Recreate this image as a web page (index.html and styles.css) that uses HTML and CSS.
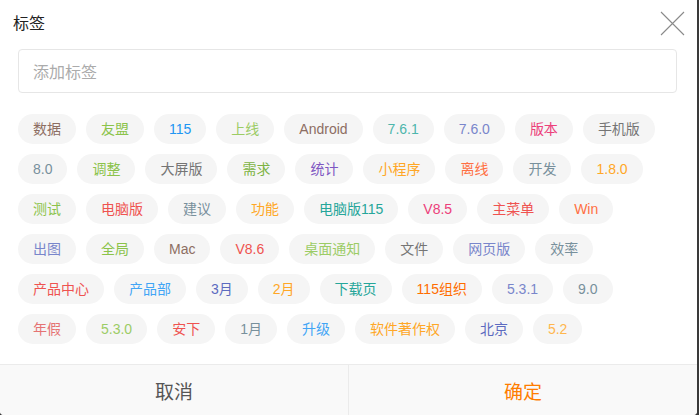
FILE: index.html
```html
<!DOCTYPE html>
<html lang="zh-CN">
<head>
<meta charset="utf-8">
<title>标签</title>
<link rel="stylesheet" href="styles.css">
</head>
<body>
<div class="dialog">
  <div class="header">
    <div class="title">标签</div>
    <button class="close" aria-label="关闭">
      <svg width="25" height="25" viewBox="0 0 25 25"><path d="M1 1L24 24M24 1L1 24" stroke="#8a8a8a" stroke-width="1.1" fill="none"/></svg>
    </button>
  </div>
  <div class="field"><input class="input" type="text" placeholder="添加标签"></div>
  <div class="tags">
    <div class="row">
      <span class="tag c-brown">数据</span><span class="tag c-green">友盟</span><span class="tag c-blue">115</span><span class="tag c-lgreen">上线</span><span class="tag c-brown">Android</span><span class="tag c-teal">7.6.1</span><span class="tag c-indigo">7.6.0</span><span class="tag c-pink">版本</span><span class="tag c-gray">手机版</span>
    </div>
    <div class="row">
      <span class="tag c-bgray">8.0</span><span class="tag c-green">调整</span><span class="tag c-gray">大屏版</span><span class="tag c-dgreen">需求</span><span class="tag c-purple">统计</span><span class="tag c-orange">小程序</span><span class="tag c-dorange">离线</span><span class="tag c-bgray">开发</span><span class="tag c-orange">1.8.0</span>
    </div>
    <div class="row">
      <span class="tag c-green">测试</span><span class="tag c-red">电脑版</span><span class="tag c-bgray">建议</span><span class="tag c-orange">功能</span><span class="tag c-dteal">电脑版115</span><span class="tag c-pink">V8.5</span><span class="tag c-red">主菜单</span><span class="tag c-dorange">Win</span>
    </div>
    <div class="row">
      <span class="tag c-indigo">出图</span><span class="tag c-green">全局</span><span class="tag c-brown">Mac</span><span class="tag c-red">V8.6</span><span class="tag c-lgreen">桌面通知</span><span class="tag c-gray">文件</span><span class="tag c-indigo">网页版</span><span class="tag c-bgray">效率</span>
    </div>
    <div class="row">
      <span class="tag c-red">产品中心</span><span class="tag c-lblue">产品部</span><span class="tag c-dindigo">3月</span><span class="tag c-orange">2月</span><span class="tag c-dteal">下载页</span><span class="tag c-deep">115组织</span><span class="tag c-indigo">5.3.1</span><span class="tag c-bgray">9.0</span>
    </div>
    <div class="row">
      <span class="tag c-lred">年假</span><span class="tag c-lgreen">5.3.0</span><span class="tag c-red">安下</span><span class="tag c-bgray">1月</span><span class="tag c-lblue">升级</span><span class="tag c-orange">软件著作权</span><span class="tag c-dindigo">北京</span><span class="tag c-lorange">5.2</span>
    </div>
  </div>
  <div class="footer">
    <button class="btn cancel">取消</button>
    <button class="btn ok">确定</button>
  </div>
</div>
</body>
</html>
```

FILE: styles.css
```css
* { box-sizing: border-box; }
html, body { margin: 0; padding: 0; }
body {
  background: #3a3a3a;
  font-family: "Liberation Sans", "Noto Sans CJK SC", sans-serif;
  width: 699px;
  height: 415px;
  overflow: hidden;
}
.dialog {
  width: 697px;
  height: 415px;
  background: #fff;
  border-radius: 0 0 4px 4px;
  display: flex;
  flex-direction: column;
  overflow: hidden;
}
.header {
  height: 49px;
  display: flex;
  justify-content: space-between;
  align-items: flex-start;
  padding: 0 12px 0 13px;
}
.title {
  margin-top: 13px;
  font-size: 16px;
  line-height: 22px;
  color: #222;
}
.close {
  margin-top: 11px;
  padding: 0;
  border: 0;
  background: none;
  width: 25px;
  height: 25px;
  display: block;
}
.close svg { display: block; }
.field { padding: 0 20px 0 18px; }
.input {
  display: block;
  width: 659px;
  height: 44px;
  border: 1px solid #e6e6e6;
  border-radius: 4px;
  padding: 4px 14px 0 14px;
  font-family: "Liberation Sans", "Noto Sans CJK SC", sans-serif;
  font-size: 16px;
  color: #333;
  outline: none;
}
.input::placeholder { color: #ababab; }
.tags {
  padding: 21px 18px 0 18px;
  display: flex;
  flex-direction: column;
  gap: 10px;
  flex: 1;
}
.row {
  display: flex;
  gap: 10px;
}
.tag {
  height: 30px;
  line-height: 30px;
  padding: 0 15px;
  border-radius: 15px;
  background: #f5f5f5;
  font-size: 14px;
  white-space: nowrap;
}
.c-brown { color: #8d6e63; }
.c-green { color: #8bc34a; }
.c-lgreen { color: #9ccc65; }
.c-dgreen { color: #7cb342; }
.c-blue { color: #2196f3; }
.c-lblue { color: #42a5f5; }
.c-teal { color: #4db6ac; }
.c-dteal { color: #26a69a; }
.c-indigo { color: #7986cb; }
.c-dindigo { color: #5c6bc0; }
.c-purple { color: #7e57c2; }
.c-pink { color: #ec407a; }
.c-gray { color: #757575; }
.c-bgray { color: #78909c; }
.c-orange { color: #ffa726; }
.c-lorange { color: #ffb74d; }
.c-dorange { color: #ff7043; }
.c-deep { color: #ff6d00; }
.c-red { color: #ef5350; }
.c-lred { color: #e57373; }
.footer {
  height: 51px;
  display: flex;
  border-top: 1px solid #ebebeb;
  background: #f9f9f9;
}
.btn {
  flex: 1;
  border: 0;
  background: none;
  padding: 0;
  font-family: "Liberation Sans", "Noto Sans CJK SC", sans-serif;
  font-size: 19px;
  font-weight: 400;
}
.cancel { color: #555; border-right: 1px solid #ebebeb; }
.ok { color: #ff7d00; }
```
